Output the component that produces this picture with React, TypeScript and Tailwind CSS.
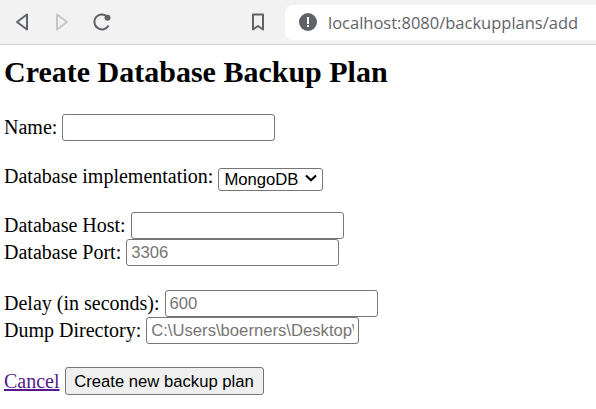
export default function App() {
  const inputClass =
    "ml-[5px] h-[27px] w-[213px] rounded-[3px] border border-[#767676] bg-white px-[4px] font-['Liberation_Sans',sans-serif] text-[16.67px] text-black outline-none placeholder:text-[#757575]";

  return (
    <div className="h-[409px] w-[596px] overflow-hidden bg-white font-['Liberation_Serif',serif] text-[20px] leading-[27px] text-black">
      <div className="flex h-[45px] items-center border-b border-[#d6d6d6] bg-[#f2f2f2] pl-[15px]">
        <svg width="14" height="18" viewBox="0 0 14 18" fill="none" stroke="#5f6368" strokeWidth="2" strokeLinejoin="round">
          <path d="M12 1.500 2 9l10 7.500z" />
        </svg>
        <svg className="ml-[26px]" width="14" height="18" viewBox="0 0 14 18" fill="none" stroke="#c4c5c7" strokeWidth="2" strokeLinejoin="round">
          <path d="M2 1.500 12 9 2 16.500z" />
        </svg>
        <svg className="ml-[24px]" width="18" height="18" viewBox="0 0 18 18" fill="none">
          <path d="M15.500 12.500A7.500 7.500 0 1 1 13.800 3.200" stroke="#5f6368" strokeWidth="2" />
          <circle cx="14.500" cy="4.800" r="3" fill="#5f6368" />
        </svg>
        <svg className="ml-[140px]" width="14" height="18" viewBox="0 0 14 18" fill="none" stroke="#5f6368" strokeWidth="2" strokeLinejoin="round">
          <path d="M2 1.500h10v15l-5-3.500-5 3.500z" />
        </svg>
        <div className="ml-[20px] flex h-[35px] flex-1 items-center rounded-l-[8px] bg-white pl-[14px]">
          <svg width="18" height="18" viewBox="0 0 18 18">
            <circle cx="9" cy="9" r="9" fill="#5f6368" />
            <rect x="8" y="4" width="2" height="7" fill="#fff" />
            <rect x="8" y="12" width="2" height="2" fill="#fff" />
          </svg>
          <span className="ml-[11px] whitespace-nowrap font-['Open_Sans',sans-serif] text-[16.500px] text-[#5f6368]">
            localhost:8080/backupplans/add
          </span>
        </div>
      </div>

      <div className="px-[4px]">
        <h1 className="mt-[10px] text-[30px] leading-[34px] font-bold">Create Database Backup Plan</h1>

        <div className="mt-[25px] flex items-center">
          <label htmlFor="name">Name:</label>
          <input id="name" className={inputClass} />
        </div>

        <div className="mt-[22px] flex items-center">
          <label htmlFor="impl">Database implementation:</label>
          <div className="relative ml-[5px] h-[23px] w-[105px]">
            <select
              id="impl"
              defaultValue="MongoDB"
              className="h-full w-full appearance-none rounded-[3px] border border-[#767676] bg-white py-0 pl-[5px] font-['Liberation_Sans',sans-serif] text-[16.67px] leading-[19px] text-black"
            >
              <option>MongoDB</option>
              <option>MySQL</option>
            </select>
            <svg className="pointer-events-none absolute top-[9px] right-[6px]" width="12" height="8" viewBox="0 0 12 8" fill="none" stroke="#000" strokeWidth="2.200">
              <path d="M1 1.500 6 6.300l5-4.800" />
            </svg>
          </div>
        </div>

        <div className="mt-[22px] flex items-center">
          <label htmlFor="host">Database Host:</label>
          <input id="host" className={inputClass} />
        </div>
        <div className="flex items-center">
          <label htmlFor="port">Database Port:</label>
          <input id="port" className={inputClass} placeholder="3306" />
        </div>

        <div className="mt-[24px] flex items-center">
          <label htmlFor="delay">Delay (in seconds):</label>
          <input id="delay" className={inputClass} placeholder="600" />
        </div>
        <div className="flex items-center">
          <label htmlFor="dump">Dump Directory:</label>
          <input id="dump" className={inputClass} placeholder="C:\Users\boerners\Desktop\" />
        </div>

        <div className="mt-[23px] flex items-center">
          <a href="#" className="text-[#551a8b] underline">Cancel</a>
          <button className="ml-[5px] h-[28px] w-[199px] rounded-[3px] border border-[#767676] bg-[#efefef] font-['Liberation_Sans',sans-serif] text-[16.67px] text-black">
            Create new backup plan
          </button>
        </div>
      </div>
    </div>
  );
}
